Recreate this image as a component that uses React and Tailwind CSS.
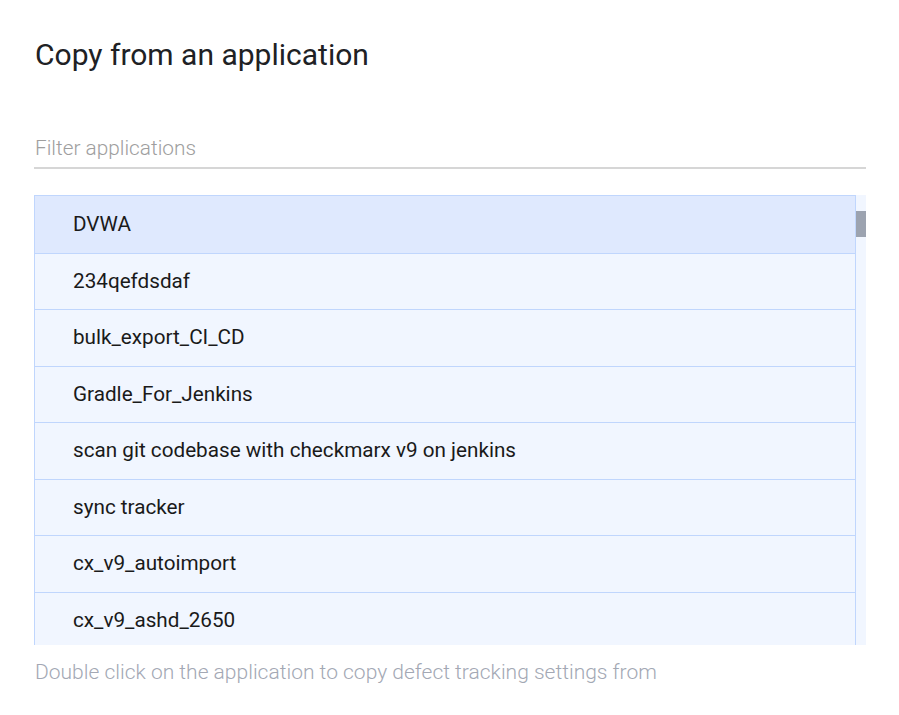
export default function App() {
  const items = [
    "DVWA",
    "234qefdsdaf",
    "bulk_export_CI_CD",
    "Gradle_For_Jenkins",
    "scan git codebase with checkmarx v9 on jenkins",
    "sync tracker",
    "cx_v9_autoimport",
    "cx_v9_ashd_2650",
  ];
  return (
    <div className="w-[899px] h-[715px] bg-white font-['Roboto',sans-serif] px-[34px] pt-[36px]">
      <h1 className="text-[30px] leading-[38px] text-[#202124] font-normal pl-px">Copy from an application</h1>
      <div className="mt-[36px] w-[832px] border-b-2 border-[#d6d6d6] h-[59px] flex items-end pb-[5px] pl-px">
        <span className="text-[20.8px] leading-[28px] font-light text-[#9e9e9e]">Filter applications</span>
      </div>
      <div className="mt-[26px] w-[832px] h-[450px] flex overflow-hidden">
        <div className="flex-1 border border-[#c0d6fd] border-b-0 bg-[#f1f6ff]">
          {items.map((t, i) => (
            <div
              key={t}
              className={`h-[56.5px] flex items-center pl-[38px] text-[20.7px] text-[#1a1a1a] border-[#c0d6fd] ${i > 0 ? "border-t" : ""} ${i === 0 ? "bg-[#dfe9fe]" : "bg-[#f1f6ff]"}`}
            >
              {t}
            </div>
          ))}
        </div>
        <div className="w-[10px] bg-[#f1f6ff] pt-[16px]">
          <div className="h-[26px] bg-[#9ca3b0]" />
        </div>
      </div>
      <p className="mt-[12px] text-[21px] leading-[31px] text-[#a3a8b4] font-light pl-px">
        Double click on the application to copy defect tracking settings from
      </p>
    </div>
  );
}
